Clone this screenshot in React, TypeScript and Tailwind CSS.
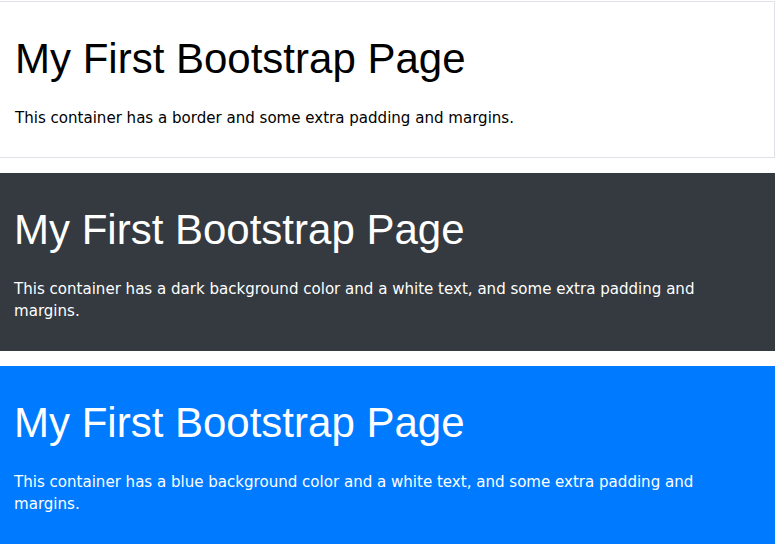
export default function App() {
  return (
    <div className="w-[775px] pt-px font-['DejaVu_Sans',sans-serif]">
      <div className="border-y border-r border-[#dee2e6] bg-white pl-[15px] pr-[15px] pt-[15px] pb-[12px] text-[#000]">
        <h1 className="mt-[16px] mb-[23px] font-['Liberation_Sans',Arial,sans-serif] text-[42px] leading-[51px] font-normal">
          My First Bootstrap Page
        </h1>
        <p className="mb-4 text-[15.05px] leading-[22px]">
          This container has a border and some extra padding and margins.
        </p>
      </div>
      <div className="mt-[15px] bg-[#343a40] pl-[14px] pr-[15px] pt-[15px] pb-[13px] text-white">
        <h1 className="mt-[16px] mb-[23px] font-['Liberation_Sans',Arial,sans-serif] text-[42px] leading-[51px] font-normal">
          My First Bootstrap Page
        </h1>
        <p className="mb-4 text-[15.05px] leading-[22px]">
          This container has a dark background color and a white text, and some extra padding and margins.
        </p>
      </div>
      <div className="mt-[15px] bg-[#007bff] pl-[14px] pr-[15px] pt-[15px] pb-[13px] text-white">
        <h1 className="mt-[16px] mb-[23px] font-['Liberation_Sans',Arial,sans-serif] text-[42px] leading-[51px] font-normal">
          My First Bootstrap Page
        </h1>
        <p className="mb-4 text-[15.05px] leading-[22px]">
          This container has a blue background color and a white text, and some extra padding and margins.
        </p>
      </div>
    </div>
  );
}
